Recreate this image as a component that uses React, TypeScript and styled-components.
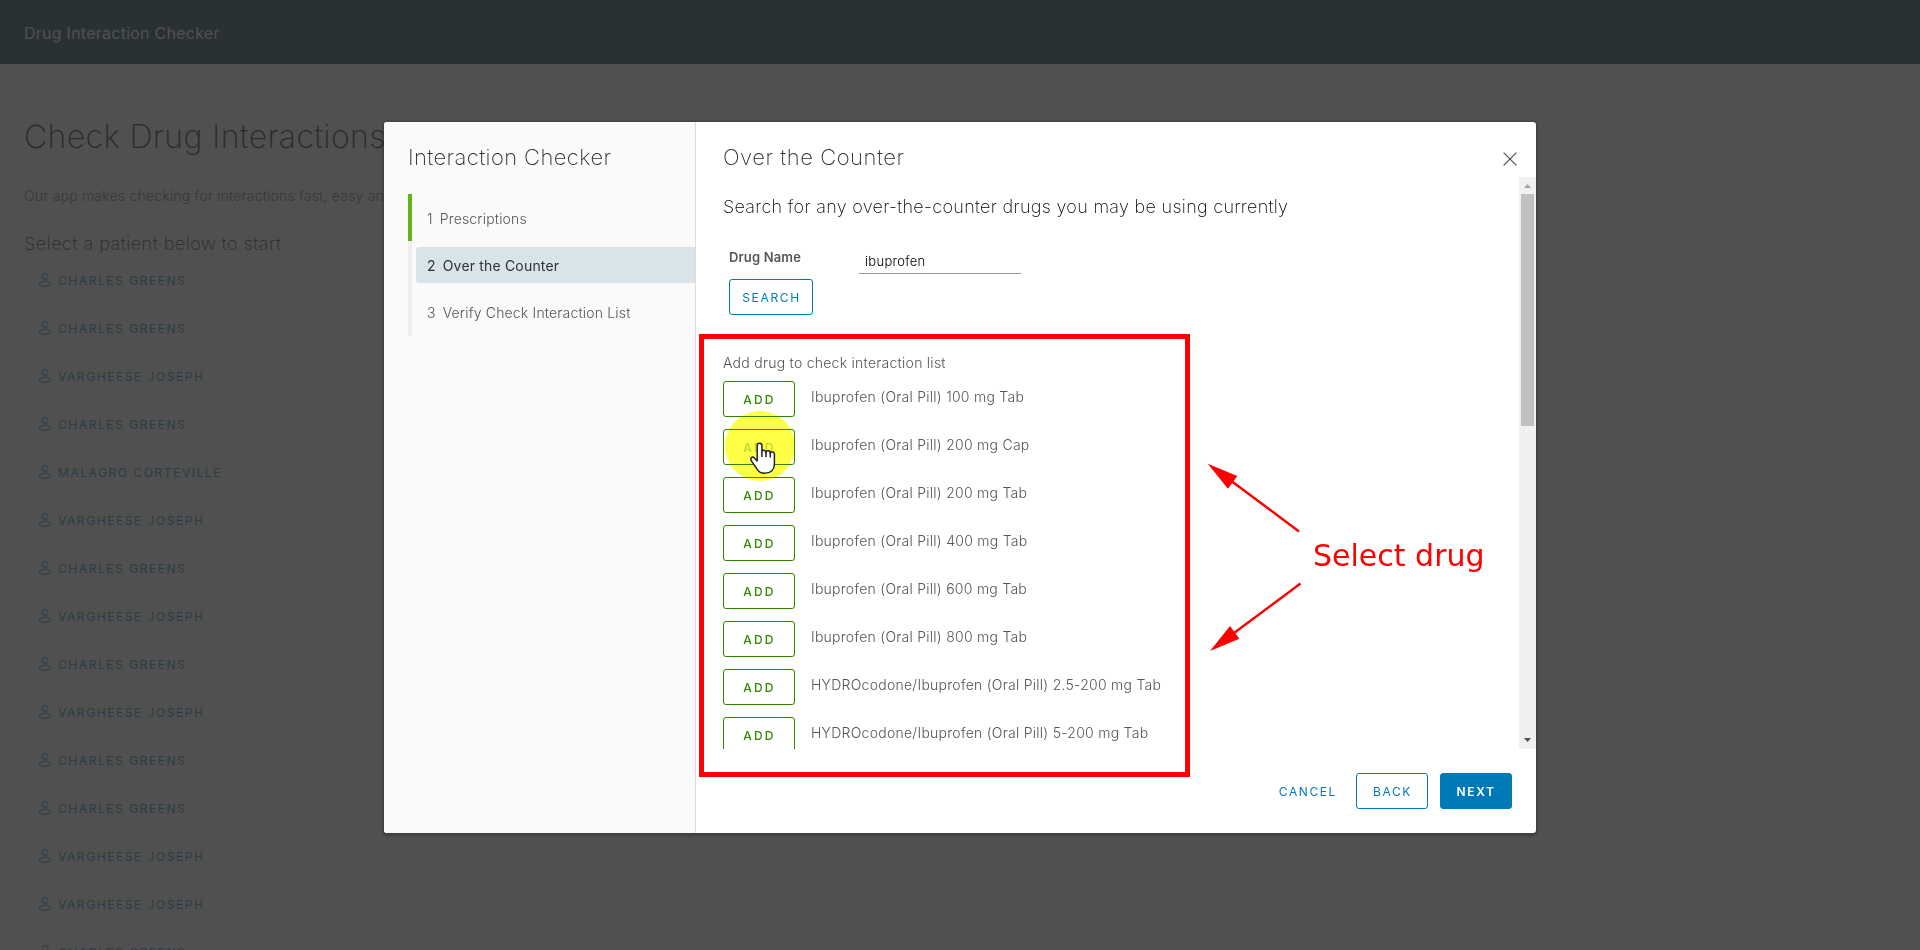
import React from "react";
import styled, { createGlobalStyle, css } from "styled-components";

const GlobalStyle = createGlobalStyle`
  *, *::before, *::after { box-sizing: border-box; }
  html, body { margin: 0; height: 100%; overflow: hidden; }
  body {
    background: #fafafa;
    color: #565656;
    font-family: Inter, "Open Sans", sans-serif;
    font-size: 14px;
    font-weight: 300;
    line-height: 24px;
    letter-spacing: 0.26px;
    font-kerning: normal;
  }
  h1, h2, h3, h4, p, ul, ol { margin: 0; padding: 0; }
  h1, h2, h3, h4 { font-weight: 200; }
  ul, ol { list-style: none; }
`;

const Page = styled.div`
  height: 950px;
  overflow: hidden;
`;

const AppHeader = styled.header`
  display: flex;
  align-items: center;
  height: 64px;
  padding: 2px 24px 1px;
  background: #00304a;
  color: #fafafa;
  font-size: 16px;
  font-weight: 400;
  letter-spacing: 0.25px;
`;

const Landing = styled.main`
  display: flex;
  flex-direction: column;
  padding: 53px 24px 0;
`;

const PageTitle = styled.h1`
  color: #000;
  font-size: 32px;
  line-height: 40px;
  letter-spacing: 0.4px;
`;

const Intro = styled.p`
  margin-top: 27px;
  letter-spacing: 0.2px;
`;

const SectionTitle = styled.h4`
  margin-top: 24px;
  color: #000;
  font-size: 18px;
  letter-spacing: 0.53px;
`;

const PatientList = styled.ul`
  display: flex;
  flex-direction: column;
  gap: 12px;
  margin-top: 7px;
  padding-left: 13px;
`;

const PatientLink = styled.li`
  display: flex;
  align-items: center;
  gap: 5px;
  height: 36px;
  color: #0079b8;
  font-size: 12px;
  font-weight: 400;
  letter-spacing: 1.56px;

  svg { margin-top: -2px; }
`;

const Backdrop = styled.div`
  position: fixed;
  inset: 0;
  display: flex;
  align-items: center;
  justify-content: center;
  padding-top: 5px;
  background: rgba(49, 49, 49, 0.85);
`;

const Dialog = styled.section`
  display: flex;
  width: 1152px;
  height: 711px;
  overflow: hidden;
  border-radius: 3px;
  background: #fff;
  box-shadow: 0 1px 2px 2px rgba(0, 0, 0, 0.2);
`;

const Sidebar = styled.aside`
  width: 312px;
  padding: 23px 0 0 24px;
  border-right: 1px solid #ddd;
  background: #fafafa;
`;

const WizardTitle = styled.h3`
  color: #313131;
  font-size: 22px;
  letter-spacing: 0.41px;
`;

const Steps = styled.ol`
  margin-top: 25px;
`;

const Step = styled.li<{ $state: "done" | "active" | "todo" }>`
  display: flex;
  align-items: center;
  height: 47px;
  padding-left: 4px;
  border-left: 4px solid ${(p) => (p.$state === "done" ? "#60b515" : "#eee")};

  &:last-child { height: 48px; }
`;

const StepButton = styled.div<{ $active: boolean }>`
  display: flex;
  flex: 1;
  align-items: center;
  gap: 7px;
  height: 36px;
  padding: 2px 0 0 11px;
  border-radius: 3px 0 0 3px;
  letter-spacing: 0.18px;
  ${(p) =>
    p.$active &&
    css`
      background: #d9e4ea;
      color: #313131;
      font-weight: 400;
    `}
`;

const Main = styled.div`
  display: flex;
  flex: 1;
  flex-direction: column;
`;

const MainHeader = styled.header`
  display: flex;
  align-items: flex-start;
  justify-content: space-between;
  height: 55px;
  padding: 23px 19px 0 27px;
`;

const MainTitle = styled.h3`
  color: #313131;
  font-size: 22px;
  letter-spacing: 0.54px;
`;

const CloseIcon = styled.svg`
  margin-top: 7px;
`;

const ScrollArea = styled.div`
  display: flex;
  height: 572px;
`;

const ScrollBody = styled.div`
  flex: 1;
  overflow: hidden;
  padding: 18px 0 0 27px;
`;

const Lead = styled.h4`
  color: #000;
  font-size: 18px;
  letter-spacing: 0.3px;
`;

const SearchForm = styled.form`
  margin-top: 26px;
  padding-left: 6px;
`;

const FieldRow = styled.div`
  display: flex;
  height: 34px;
`;

const FieldLabel = styled.label`
  width: 130px;
  font-size: 13px;
  font-weight: 600;
  letter-spacing: 0.15px;
`;

const FieldInput = styled.input`
  width: 162px;
  height: 24px;
  margin-top: 5px;
  padding: 0 6px 2px;
  border: 0;
  border-bottom: 1px solid #9a9a9a;
  outline: none;
  background: transparent;
  color: #000;
  font: 300 13px/21px Inter, sans-serif;
  letter-spacing: 0.3px;
`;

const tones = {
  primary: css`
    padding-left: 0;
    border-color: #0079b8;
    background: #0079b8;
    color: #fff;
    font-weight: 600;
  `,
  outline: css`
    border-color: #0079b8;
    color: #0079b8;
  `,
  success: css`
    border-color: #318700;
    color: #318700;
    font-weight: 500;
    letter-spacing: 2.2px;
  `,
  flat: css`
    padding: 2px 6px 0 12px;
    border-color: transparent;
    color: #0079b8;
    letter-spacing: 1.6px;
  `,
};

const Button = styled.button<{ $tone: keyof typeof tones; $width?: number; $dimmed?: boolean }>`
  display: flex;
  align-items: center;
  justify-content: center;
  width: ${(p) => (p.$width ? `${p.$width}px` : "auto")};
  height: 36px;
  padding: 2px 0 0 1px;
  border: 1px solid;
  border-radius: 3px;
  background: transparent;
  font: 400 12px/24px Inter, sans-serif;
  letter-spacing: 1.65px;
  ${(p) => tones[p.$tone]}
  ${(p) => p.$dimmed && css`color: #bdd6a6;`}
`;

const ListCaption = styled.p`
  margin-top: 36px;
`;

const DrugList = styled.ul`
  display: flex;
  flex-direction: column;
  gap: 12px;
  margin-top: 6px;
`;

const DrugRow = styled.li`
  display: flex;
  gap: 16px;
  height: 36px;
`;

const DrugName = styled.span`
  padding-top: 4px;
  white-space: nowrap;
`;

const ScrollTrack = styled.div`
  display: flex;
  flex-direction: column;
  align-items: center;
  width: 17px;
  background: #f0f0f0;
`;

const ScrollArrow = styled.svg`
  width: 17px;
  height: 17px;
`;

const ScrollThumb = styled.div`
  width: 13px;
  height: 232px;
  margin-bottom: auto;
  background: #c1c1c1;
`;

const Footer = styled.footer`
  display: flex;
  justify-content: flex-end;
  gap: 12px;
  padding: 24px 24px 0 0;
`;

const Highlight = styled.div`
  position: fixed;
  left: 699px;
  top: 334px;
  width: 491px;
  height: 443px;
  border: 5px solid #f00;
`;

const ClickSpot = styled.div`
  position: fixed;
  left: 725px;
  top: 411px;
  width: 70px;
  height: 70px;
  border-radius: 50%;
  background: #ffff46;
  mix-blend-mode: multiply;
`;

const HandCursor = styled.svg`
  position: fixed;
  left: 750px;
  top: 442px;
`;

const Arrows = styled.svg`
  position: fixed;
  left: 1200px;
  top: 455px;
`;

const Note = styled.div`
  position: fixed;
  left: 1313px;
  top: 538px;
  color: #f00;
  font: 400 30px/36px "DejaVu Sans", sans-serif;
  letter-spacing: 0;
  white-space: nowrap;
`;

const UserIcon = () => (
  <svg width="16" height="16" viewBox="0 0 36 36" fill="none" stroke="currentColor" strokeWidth="2.2">
    <path d="M18 17a7 7 0 1 0-7-7 7 7 0 0 0 7 7Z" />
    <path d="M29.7 25a16.2 16.2 0 0 0-23.4 0 1 1 0 0 0-.3.7V31a1 1 0 0 0 1 1h22a1 1 0 0 0 1-1v-5.3a1 1 0 0 0-.3-.7Z" />
  </svg>
);

const patients = [
  "CHARLES GREENS",
  "CHARLES GREENS",
  "VARGHEESE JOSEPH",
  "CHARLES GREENS",
  "MALAGRO CORTEVILLE",
  "VARGHEESE JOSEPH",
  "CHARLES GREENS",
  "VARGHEESE JOSEPH",
  "CHARLES GREENS",
  "VARGHEESE JOSEPH",
  "CHARLES GREENS",
  "CHARLES GREENS",
  "VARGHEESE JOSEPH",
  "VARGHEESE JOSEPH",
  "CHARLES GREENS",
];

const steps = [
  { label: "Prescriptions", state: "done" },
  { label: "Over the Counter", state: "active" },
  { label: "Verify Check Interaction List", state: "todo" },
] as const;

const drugs = [
  "Ibuprofen (Oral Pill) 100 mg Tab",
  "Ibuprofen (Oral Pill) 200 mg Cap",
  "Ibuprofen (Oral Pill) 200 mg Tab",
  "Ibuprofen (Oral Pill) 400 mg Tab",
  "Ibuprofen (Oral Pill) 600 mg Tab",
  "Ibuprofen (Oral Pill) 800 mg Tab",
  "HYDROcodone/Ibuprofen (Oral Pill) 2.5-200 mg Tab",
  "HYDROcodone/Ibuprofen (Oral Pill) 5-200 mg Tab",
];

const hoveredDrug = 1;

export default function App() {
  return (
    <>
      <GlobalStyle />
      <Page>
        <AppHeader>Drug Interaction Checker</AppHeader>
        <Landing>
          <PageTitle>Check Drug Interactions</PageTitle>
          <Intro>Our app makes checking for interactions fast, easy and</Intro>
          <SectionTitle>Select a patient below to start</SectionTitle>
          <PatientList>
            {patients.map((name, i) => (
              <PatientLink key={i}>
                <UserIcon />
                {name}
              </PatientLink>
            ))}
          </PatientList>
        </Landing>
      </Page>

      <Backdrop>
        <Dialog>
          <Sidebar>
            <WizardTitle>Interaction Checker</WizardTitle>
            <Steps>
              {steps.map((step, i) => (
                <Step key={step.label} $state={step.state}>
                  <StepButton $active={step.state === "active"}>
                    <span>{i + 1}</span>
                    <span>{step.label}</span>
                  </StepButton>
                </Step>
              ))}
            </Steps>
          </Sidebar>

          <Main>
            <MainHeader>
              <MainTitle>Over the Counter</MainTitle>
              <CloseIcon width="14" height="14" viewBox="0 0 14 14" stroke="#565656" strokeWidth="1.3">
                <path d="M.6.6l12.8 12.8M13.4.6.6 13.4" />
              </CloseIcon>
            </MainHeader>

            <ScrollArea>
              <ScrollBody>
                <Lead>Search for any over-the-counter drugs you may be using currently</Lead>
                <SearchForm>
                  <FieldRow>
                    <FieldLabel htmlFor="drug-name">Drug Name</FieldLabel>
                    <FieldInput id="drug-name" defaultValue="ibuprofen" spellCheck={false} />
                  </FieldRow>
                  <Button type="button" $tone="outline" $width={84}>SEARCH</Button>
                </SearchForm>
                <ListCaption>Add drug to check interaction list</ListCaption>
                <DrugList>
                  {drugs.map((drug, i) => (
                    <DrugRow key={drug}>
                      <Button $tone="success" $width={72} $dimmed={i === hoveredDrug}>ADD</Button>
                      <DrugName>{drug}</DrugName>
                    </DrugRow>
                  ))}
                </DrugList>
              </ScrollBody>
              <ScrollTrack>
                <ScrollArrow viewBox="0 0 17 17"><path d="M5 11h7L8.5 7z" fill="#a3a3a3" /></ScrollArrow>
                <ScrollThumb />
                <ScrollArrow viewBox="0 0 17 17"><path d="M5 6h7L8.5 10z" fill="#505050" /></ScrollArrow>
              </ScrollTrack>
            </ScrollArea>

            <Footer>
              <Button $tone="flat">CANCEL</Button>
              <Button $tone="outline" $width={72}>BACK</Button>
              <Button $tone="primary" $width={72}>NEXT</Button>
            </Footer>
          </Main>
        </Dialog>
      </Backdrop>

      <Highlight />
      <ClickSpot />
      <HandCursor width="26" height="33" viewBox="0 0 26 33" fill="#fff" stroke="#222" strokeWidth="1.5" strokeLinejoin="round">
        <path d="M9.5 1.2C8 1.2 7.2 2.2 7.2 3.6V19L4.6 16.2C3.6 15.1 2.2 15 1.4 15.7.5 16.6.7 17.7 1.4 18.8L7.2 27.3C8.8 30 11 31.2 14.8 31.2 20.8 31.2 24.4 27.5 24.4 22V12.3C24.4 9.3 20.6 9.2 20.3 11.4 20.1 8.2 16.2 8 16 10.6 15.8 7.8 12.2 7.6 11.9 9.2V3.6C11.9 2.2 11 1.2 9.5 1.2Z" />
        <path d="M11.9 9v6M16 10v5.2M20.3 11v4.6" fill="none" />
      </HandCursor>
      <Arrows width="110" height="205" viewBox="1200 455 110 205" fill="#f00" stroke="#f00">
        <path d="M1232 481.5 1299 531.5M1234 633 1300.5 583.5" strokeWidth="2.4" />
        <path d="M1207.7 463.7 1237.3 476 1228 488.7ZM1210 651 1230 626 1239.3 638.7Z" stroke="none" />
      </Arrows>
      <Note>Select drug</Note>
    </>
  );
}
